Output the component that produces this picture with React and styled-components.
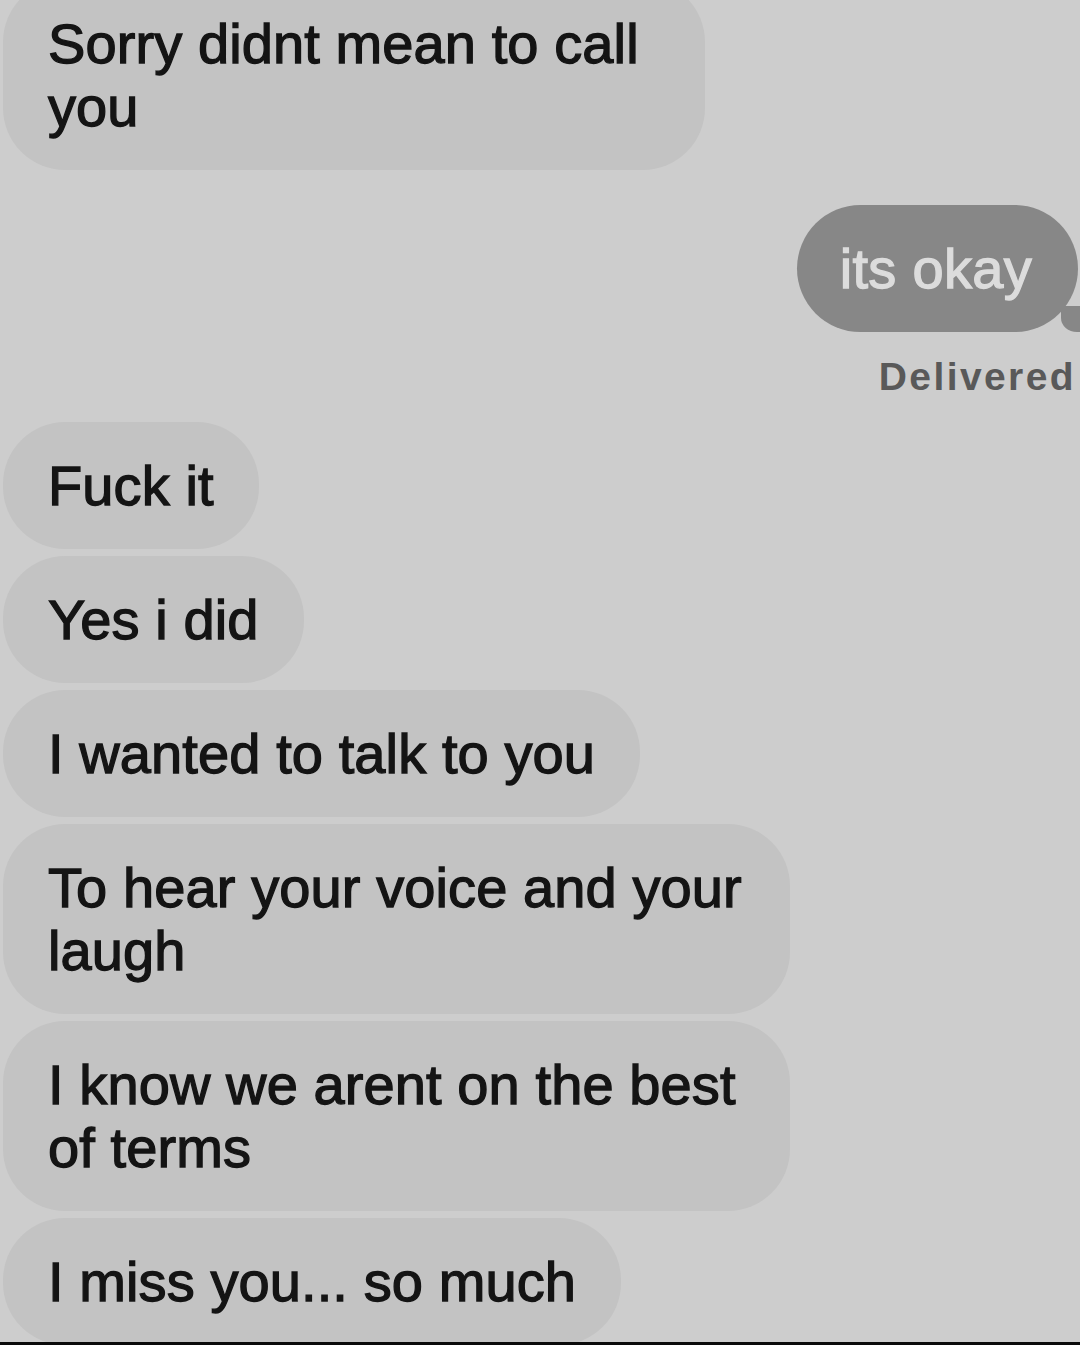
import React from "react";
import styled, { createGlobalStyle } from "styled-components";

const Global = createGlobalStyle`
  html, body { margin: 0; padding: 0; background: #cdcdcd; }
  body { font-family: "Liberation Sans", Arial, sans-serif; overflow: hidden; }
`;

const Screen = styled.div`
  width: 1080px;
  height: 1345px;
  box-sizing: border-box;
  border-bottom: 3px solid #0a0a0a;
  overflow: hidden;
  background: #cdcdcd;
  display: flex;
  flex-direction: column;
`;

const Incoming = styled.div`
  align-self: flex-start;
  box-sizing: border-box;
  width: ${(p) => (p.$w ? `${p.$w}px` : "auto")};
  margin: ${(p) => p.$mt || 0}px 0 0 3px;
  padding: 32px 45px;
  border-radius: 62px;
  background: #c3c3c3;
  color: #141414;
  font-size: 56px;
  line-height: 63px;
  letter-spacing: 0.1px;
  -webkit-text-stroke: 1.3px #141414;
`;

const Line = styled.div`
  white-space: nowrap;
`;

const Outgoing = styled.div`
  position: relative;
  align-self: flex-end;
  margin: ${(p) => p.$mt}px 2px 0 0;
  padding: 32px 46px 32px 43px;
  border-radius: 64px;
  background: #878787;
  color: #dcdcdc;
  font-size: 56px;
  line-height: 63px;
  letter-spacing: 0.3px;
  -webkit-text-stroke: 1.3px #dcdcdc;
  &::before {
    content: "";
    position: absolute;
    right: -5px;
    bottom: 0;
    width: 22px;
    height: 26px;
    background: #878787;
    border-bottom-left-radius: 16px 14px;
  }
  &::after {
    content: "";
    position: absolute;
    right: -16px;
    bottom: 0;
    width: 11px;
    height: 26px;
    background: #cdcdcd;
    border-bottom-left-radius: 10px 12px;
  }
`;

const Status = styled.div`
  align-self: flex-end;
  margin: 23px 4px 23px 0;
  font-size: 39px;
  line-height: 44px;
  font-weight: 700;
  letter-spacing: 2.4px;
  color: #595959;
`;

const Stack = styled.div`
  display: flex;
  flex-direction: column;
  gap: 7px;
`;

const thread = [
  { lines: ["Fuck it"] },
  { lines: ["Yes i did"] },
  { lines: ["I wanted to talk to you"] },
  { lines: ["To hear your voice and your", "laugh"], w: 787 },
  { lines: ["I know we arent on the best", "of terms"], w: 787 },
  { lines: ["I miss you... so much"] },
];

export default function App() {
  return (
    <>
      <Global />
      <Screen>
        <Incoming $w={702} $mt={-20}>
          <Line>Sorry didnt mean to call</Line>
          <Line>you</Line>
        </Incoming>
        <Outgoing $mt={35}>its okay</Outgoing>
        <Status>Delivered</Status>
        <Stack>
          {thread.map((m, i) => (
            <Incoming key={i} $w={m.w}>
              {m.lines.map((l, j) => (
                <Line key={j}>{l}</Line>
              ))}
            </Incoming>
          ))}
        </Stack>
      </Screen>
    </>
  );
}
